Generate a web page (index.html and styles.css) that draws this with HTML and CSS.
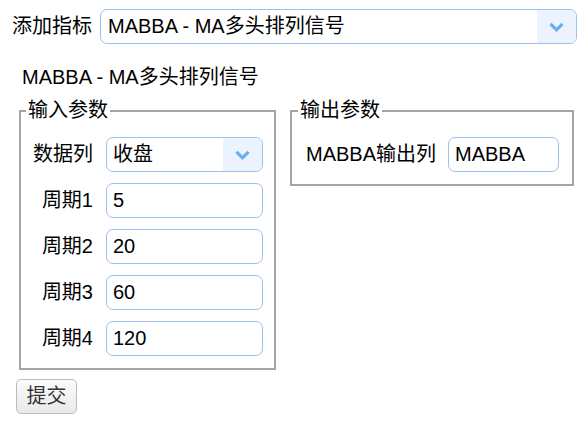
FILE: index.html
```html
<!DOCTYPE html>
<html lang="zh">
<head>
<meta charset="utf-8">
<title>添加指标</title>
<link rel="stylesheet" href="styles.css">
</head>
<body>
<div class="page">
  <div class="top-row">
    <label class="top-label">添加指标</label>
    <div class="select select-wide">
      <select class="select-native"><option>MABBA - MA多头排列信号</option></select>
      <span class="arrow"><svg width="15" height="10" viewBox="0 0 15 10"><path d="M1.5 1.8 L7.5 7.8 L13.5 1.8" fill="none" stroke="#6aadef" stroke-width="3.2"/></svg></span>
    </div>
  </div>
  <div class="title">MABBA - MA多头排列信号</div>
  <div class="groups">
    <fieldset class="group group-in">
      <legend class="legend legend-in">输入参数</legend>
      <div class="form-grid">
        <label class="field-label">数据列</label>
        <div class="select select-small">
          <select class="select-native"><option>收盘</option></select>
          <span class="arrow"><svg width="15" height="10" viewBox="0 0 15 10"><path d="M1.5 1.8 L7.5 7.8 L13.5 1.8" fill="none" stroke="#6aadef" stroke-width="3.2"/></svg></span>
        </div>
        <label class="field-label">周期1</label>
        <input class="text-input" value="5">
        <label class="field-label">周期2</label>
        <input class="text-input" value="20">
        <label class="field-label">周期3</label>
        <input class="text-input" value="60">
        <label class="field-label">周期4</label>
        <input class="text-input" value="120">
      </div>
    </fieldset>
    <fieldset class="group group-out">
      <legend class="legend legend-out">输出参数</legend>
      <div class="out-row">
        <label class="field-label">MABBA输出列</label>
        <input class="text-input text-input-out" value="MABBA">
      </div>
    </fieldset>
  </div>
  <button class="submit">提交</button>
</div>
</body>
</html>
```
FILE: styles.css
```css
html, body {
  margin: 0;
  padding: 0;
  background: #ffffff;
}
body {
  font-family: "Liberation Sans", "Noto Sans CJK SC", sans-serif;
  font-size: 20px;
  line-height: 23px;
  color: #000;
}
.page {
  display: flex;
  flex-direction: column;
  align-items: flex-start;
}
.top-row {
  display: flex;
  align-items: center;
  gap: 8px;
  padding: 9px 0 0 12px;
}
.top-label {
  width: 80px;
  white-space: nowrap;
}
.select {
  display: flex;
  box-sizing: border-box;
  height: 35px;
  border: 1px solid #9cc0f0;
  border-radius: 7px;
  overflow: hidden;
  background: #fff;
}
.select-wide {
  width: 477px;
}
.select-small {
  width: 157px;
}
.select-native {
  -webkit-appearance: none;
  appearance: none;
  flex: 1;
  min-width: 0;
  border: none;
  outline: none;
  background: transparent;
  font: inherit;
  color: #000;
  padding: 0 0 0 7px;
  margin: 0;
}
.select-small .select-native {
  padding-left: 6px;
}
.arrow {
  width: 39px;
  flex: none;
  background: #eaf3fe;
  display: flex;
  align-items: center;
  justify-content: center;
}
.title {
  margin: 22px 0 0 22px;
}
.groups {
  display: flex;
  align-items: flex-start;
  gap: 14px;
  margin: 10px 0 0 19px;
}
.group {
  box-sizing: border-box;
  margin: 0;
  border: 2px solid #a4a4a4;
}
.group-in {
  width: 257px;
  padding: 15px 11px 12px 12px;
}
.group-out {
  width: 284px;
  padding: 15px 13px 12px 14px;
}
.legend {
  padding: 0 2px;
  line-height: 23px;
}
.legend-in {
  margin-left: -7px;
}
.legend-out {
  margin-left: -8px;
}
.form-grid {
  display: grid;
  grid-template-columns: auto 157px;
  column-gap: 13px;
  row-gap: 11px;
  align-items: center;
}
.field-label {
  justify-self: end;
  white-space: nowrap;
}
.text-input {
  box-sizing: border-box;
  height: 35px;
  width: 157px;
  border: 1px solid #9cc0f0;
  border-radius: 7px;
  padding: 0 6px;
  margin: 0;
  font: inherit;
  color: #000;
  background: #fff;
  outline: none;
}
.out-row {
  display: flex;
  align-items: center;
  gap: 12px;
}
.text-input-out {
  width: 111px;
}
.submit {
  margin: 9px 0 0 16px;
  box-sizing: border-box;
  width: 61px;
  height: 35px;
  padding: 0;
  border: 1px solid #bcbcbc;
  border-radius: 5px;
  background: linear-gradient(#fbfbfb, #e9e9e9);
  font: inherit;
  color: #333;
}
```
